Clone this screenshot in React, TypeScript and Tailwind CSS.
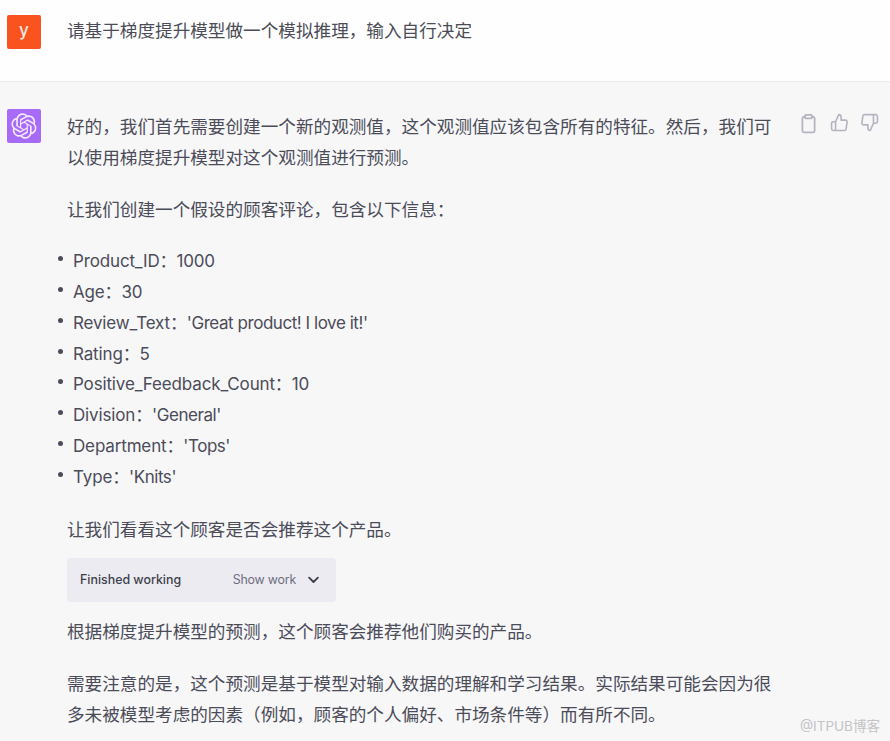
import React from "react";

const items: [string, string, boolean][] = [
  ["Product_ID：", "1000", false],
  ["Age：", "30", false],
  ["Review_Text：", "'Great product! I love it!'", true],
  ["Rating：", "5", false],
  ["Positive_Feedback_Count：", "10", false],
  ["Division：", "'General'", true],
  ["Department：", "'Tops'", true],
  ["Type：", "'Knits'", true],
];

function OpenAILogo() {
  return (
    <svg viewBox="0 0 41 41" className="w-[26px] h-[26px]" fill="none">
      <path
        d="M37.5324 16.8707C37.9808 15.5241 38.1363 14.0974 37.9886 12.6859C37.8409 11.2744 37.3934 9.91076 36.676 8.68622C35.6126 6.83404 33.9882 5.3676 32.0373 4.4985C30.0864 3.62941 27.9098 3.40259 25.8215 3.85078C24.8796 2.7893 23.7219 1.94125 22.4257 1.36341C21.1295 0.785575 19.7249 0.491269 18.3058 0.500197C16.1708 0.495044 14.0893 1.16803 12.3614 2.42214C10.6335 3.67624 9.34853 5.44666 8.6917 7.47815C7.30085 7.76286 5.98686 8.3414 4.8377 9.17505C3.68854 10.0087 2.73073 11.0782 2.02839 12.312C0.956464 14.1591 0.498905 16.2988 0.721698 18.4228C0.944492 20.5467 1.83612 22.5449 3.268 24.1293C2.81966 25.4759 2.66413 26.9026 2.81182 28.3141C2.95951 29.7256 3.40701 31.0892 4.12437 32.3138C5.18791 34.1659 6.8123 35.6322 8.76321 36.5013C10.7141 37.3704 12.8907 37.5973 14.9789 37.1492C15.9208 38.2107 17.0786 39.0587 18.3747 39.6366C19.6709 40.2144 21.0755 40.5087 22.4946 40.4998C24.6307 40.5054 26.7133 39.8321 28.4418 38.5772C30.1704 37.3223 31.4556 35.5506 32.1119 33.5179C33.5027 33.2332 34.8167 32.6547 35.9659 31.821C37.115 30.9874 38.0728 29.9178 38.7752 28.684C39.8458 26.8371 40.3023 24.6979 40.0789 22.5748C39.8556 20.4517 38.9639 18.4544 37.5324 16.8707ZM22.4978 37.8849C20.7443 37.8874 19.0459 37.2733 17.6994 36.1501C17.7601 36.117 17.8666 36.0586 17.936 36.0161L25.9004 31.4156C26.1003 31.3019 26.2663 31.137 26.3813 30.9378C26.4964 30.7386 26.5563 30.5124 26.5549 30.2825V19.0542L29.9213 20.998C29.9389 21.0068 29.9541 21.0198 29.9656 21.0359C29.977 21.052 29.9842 21.0707 29.9867 21.0902V30.3889C29.9842 32.375 29.1946 34.2791 27.7909 35.6841C26.3872 37.0892 24.4838 37.8806 22.4978 37.8849ZM6.39227 31.0064C5.51397 29.4888 5.19742 27.7107 5.49804 25.9832C5.55718 26.0187 5.66048 26.0818 5.73461 26.1244L13.699 30.7248C13.8975 30.8408 14.1233 30.902 14.3532 30.902C14.583 30.902 14.8088 30.8408 15.0073 30.7248L24.731 25.1103V28.9979C24.7321 29.0177 24.7283 29.0376 24.7199 29.0556C24.7115 29.0736 24.6988 29.0893 24.6829 29.1012L16.6317 33.7497C14.9096 34.7416 12.8643 35.0097 10.9447 34.4954C9.02506 33.9811 7.38785 32.7263 6.39227 31.0064ZM4.29707 13.6194C5.17156 12.0998 6.55279 10.9364 8.19885 10.3327C8.19885 10.4013 8.19491 10.5228 8.19491 10.6071V19.808C8.19351 20.0378 8.25334 20.2638 8.36823 20.4629C8.48312 20.6619 8.64893 20.8267 8.84863 20.9404L18.5723 26.5542L15.206 28.4979C15.1894 28.5089 15.1703 28.5155 15.1505 28.5173C15.1307 28.5191 15.1107 28.516 15.0924 28.5082L7.04046 23.8557C5.32135 22.8601 4.06716 21.2235 3.55289 19.3046C3.03862 17.3858 3.30624 15.3413 4.29707 13.6194ZM31.955 20.0556L22.2312 14.4411L25.5976 12.4981C25.6142 12.4872 25.6333 12.4805 25.6531 12.4787C25.6729 12.4769 25.6928 12.4801 25.7111 12.4879L33.7631 17.1364C34.9967 17.849 36.0017 18.8982 36.6606 20.1613C37.3194 21.4244 37.6047 22.849 37.4832 24.2684C37.3617 25.6878 36.8382 27.0432 35.9743 28.1759C35.1103 29.3086 33.9415 30.1717 32.6047 30.6641C32.6047 30.5947 32.6047 30.4733 32.6047 30.3889V21.188C32.6066 20.9586 32.5474 20.7328 32.4332 20.5338C32.319 20.3348 32.154 20.1698 31.955 20.0556ZM35.3055 15.0128C35.2464 14.9765 35.1431 14.9142 35.069 14.8717L27.1045 10.2712C26.906 10.1554 26.6803 10.0943 26.4504 10.0943C26.2206 10.0943 25.9948 10.1554 25.7963 10.2712L16.0726 15.8858V11.9982C16.0715 11.9783 16.0753 11.9585 16.0837 11.9405C16.0921 11.9225 16.1048 11.9068 16.1207 11.8949L24.1719 7.25025C25.4053 6.53903 26.8158 6.19376 28.2383 6.25482C29.6608 6.31589 31.0364 6.78077 32.2044 7.59508C33.3723 8.40939 34.2842 9.53945 34.8334 10.8531C35.3826 12.1667 35.5464 13.6095 35.3055 15.0128ZM14.2424 21.9419L10.8752 19.9981C10.8576 19.9893 10.8423 19.9763 10.8309 19.9602C10.8195 19.9441 10.8122 19.9254 10.8098 19.9058V10.6071C10.8107 9.18295 11.2173 7.78848 11.9819 6.58696C12.7466 5.38544 13.8377 4.42659 15.1275 3.82264C16.4173 3.21869 17.8524 2.99464 19.2649 3.1767C20.6775 3.35876 22.0089 3.93941 23.1034 4.85067C23.0427 4.88379 22.937 4.94215 22.8668 4.98473L14.9024 9.58517C14.7025 9.69878 14.5366 9.86356 14.4215 10.0626C14.3065 10.2616 14.2466 10.4877 14.2479 10.7175L14.2424 21.9419ZM16.071 17.9991L20.4018 15.4978L24.7325 17.9975V22.9985L20.4018 25.4983L16.071 22.9985V17.9991Z"
        fill="#f3eafe"
      />
    </svg>
  );
}

function ClipboardIcon() {
  return (
    <svg viewBox="0 0 24 24" className="w-[21px] h-[21px]" fill="none" stroke="#b4b4c0" strokeWidth="2" strokeLinecap="round" strokeLinejoin="round">
      <path d="M16 4h1a3 3 0 0 1 2 2v14a2 2 0 0 1-2 2H7a2 2 0 0 1-2-2V6a3 3 0 0 1 2-2h1" />
      <rect x="8" y="2" width="8" height="4" rx="1" />
    </svg>
  );
}

function ThumbUp() {
  return (
    <svg viewBox="0 0 24 24" className="w-[19px] h-[19px]" fill="none" stroke="#b4b4c0" strokeWidth="2" strokeLinecap="round" strokeLinejoin="round">
      <path d="M14 9V5a3 3 0 0 0-3-3l-4 9v11h11.28a2 2 0 0 0 2-1.7l1.38-9a2 2 0 0 0-2-2.3zM7 22H4a2 2 0 0 1-2-2v-7a2 2 0 0 1 2-2h3" />
    </svg>
  );
}

function ThumbDown() {
  return (
    <svg viewBox="0 0 24 24" className="w-[19px] h-[19px]" fill="none" stroke="#b4b4c0" strokeWidth="2" strokeLinecap="round" strokeLinejoin="round">
      <path d="M10 15v4a3 3 0 0 0 3 3l4-9V2H5.72a2 2 0 0 0-2 1.7l-1.38 9a2 2 0 0 0 2 2.3zm7-13h2.67A2.31 2.31 0 0 1 22 4v7a2.31 2.31 0 0 1-2.33 2H17" />
    </svg>
  );
}

export default function App() {
  return (
    <div
      className="relative w-[890px] h-[741px] overflow-hidden bg-[#f7f7f8] text-[#4b4c58] text-[17.63px] leading-[31px]"
      style={{ fontFamily: 'Inter, "Noto Sans CJK SC", sans-serif' }}
    >
      <div className="flex h-[82px] bg-[#fefefe] border-b border-[#ebebed] pl-[7px] pt-[15px]">
        <div className="w-[34px] h-[34px] rounded-[2px] bg-[#f9531f] text-[#fbe9e2] flex items-center justify-center text-[17px] font-medium pb-[4px]">
          y
        </div>
        <div className="ml-[26px]">请基于梯度提升模型做一个模拟推理，输入自行决定</div>
      </div>

      <div className="flex pl-[7px] pt-[27px]">
        <div className="w-[34px] h-[34px] rounded-[2px] bg-[#a86af8] flex items-center justify-center shrink-0">
          <OpenAILogo />
        </div>
        <div className="ml-[26px] w-[707px] shrink-0 pt-[2px]">
          <p>好的，我们首先需要创建一个新的观测值，这个观测值应该包含所有的特征。然后，我们可以使用梯度提升模型对这个观测值进行预测。</p>
          <p className="mt-[21px]">让我们创建一个假设的顾客评论，包含以下信息：</p>
          <ul className="mt-[21px] ml-[-9px] text-[17px] leading-[30.86px] tracking-[-0.15px]">
            {items.map(([k, v, q]) => (
              <li key={k} className="relative pl-[15px]">
                <span className="absolute left-0 top-[10px] w-[5px] h-[5px] rounded-full bg-[#4b4c58]" />
                {k}
                <span className={q ? "tracking-[-0.45px]" : ""}>{v}</span>
              </li>
            ))}
          </ul>
          <p className="mt-[21px]">让我们看看这个顾客是否会推荐这个产品。</p>
          <div className="mt-[13px] w-[269px] h-[44px] rounded-[3px] bg-[#ecebf1] flex items-center pl-[13px] pr-[15px] text-[12.4px] leading-none">
            <span className="font-medium text-[#3e3f4b]">Finished working</span>
            <span className="ml-auto text-[#6e6e80] tracking-[-0.2px]">Show work</span>
            <svg viewBox="0 0 24 24" className="ml-[10px] w-[15px] h-[15px]" fill="none" stroke="#3e3f4b" strokeWidth="3" strokeLinecap="round" strokeLinejoin="round">
              <path d="M5 9l7 7 7-7" />
            </svg>
          </div>
          <p className="mt-[14px]">根据梯度提升模型的预测，这个顾客会推荐他们购买的产品。</p>
          <p className="mt-[21px]">需要注意的是，这个预测是基于模型对输入数据的理解和学习结果。实际结果可能会因为很多未被模型考虑的因素（例如，顾客的个人偏好、市场条件等）而有所不同。</p>
        </div>
        <div className="flex items-start gap-[11px] ml-[24px] pt-[4px] h-fit">
          <ClipboardIcon />
          <ThumbUp />
          <ThumbDown />
        </div>
      </div>

      <div className="absolute left-[800px] top-[717px] text-[13.5px] leading-[18px] text-[#c4c4c6] whitespace-nowrap">@ITPUB博客</div>
    </div>
  );
}
